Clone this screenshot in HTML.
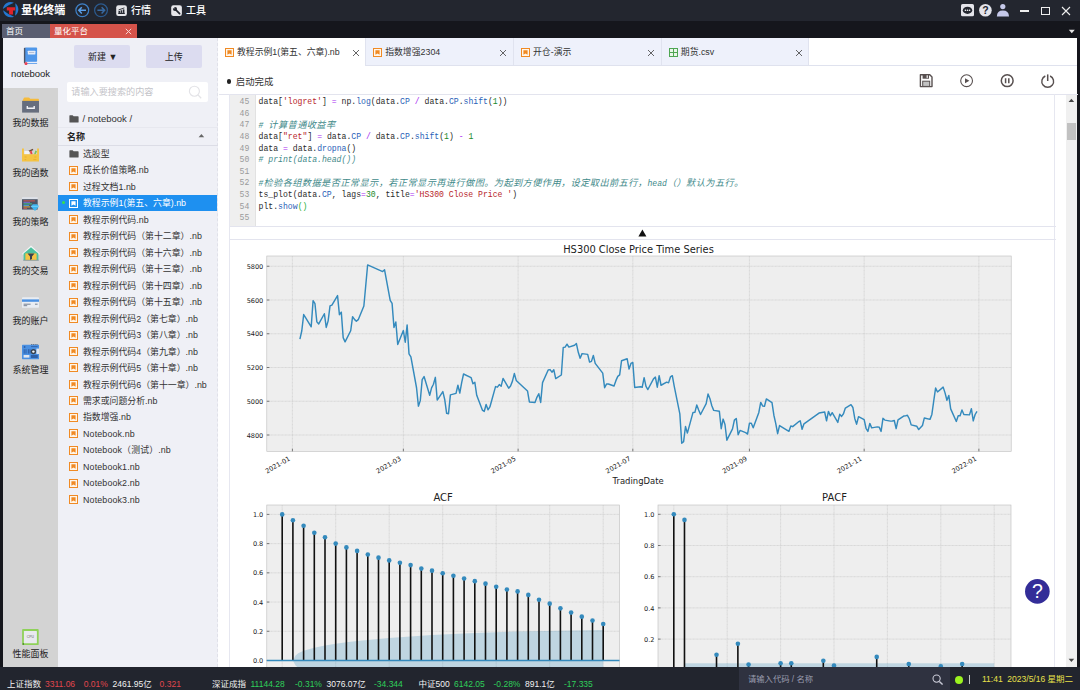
<!DOCTYPE html>
<html lang="zh-CN">
<head>
<meta charset="utf-8">
<title>量化终端</title>
<style>
*{box-sizing:border-box;margin:0;padding:0}
html,body{width:1080px;height:690px;overflow:hidden;background:#15161c}
body{position:relative;font-family:"Liberation Sans","Noto Sans CJK SC",sans-serif;font-size:9px;color:#333;-webkit-font-smoothing:antialiased}
.abs{position:absolute}
#titlebar{left:0;top:0;width:1080px;height:21px;background:#23262f}
#tabrow{left:0;top:21px;width:1080px;height:17px;background:#15161c}
#main{left:2.5px;top:38px;width:1074.5px;height:629px;background:#fff}
#status{left:0;top:667px;width:1080px;height:23px;background:#22252e}
.t{position:absolute;white-space:nowrap;line-height:1}
/* title bar */
#appname{left:21.3px;top:5.2px;font-size:11px;font-weight:bold;color:#fff;letter-spacing:0}
.menu{color:#fff;font-size:10px;top:4px}
/* top tabs */
#tab1{left:2px;top:24px;width:47.5px;height:14px;background:#5a5e71}
#tab2{left:50px;top:24px;width:87px;height:14px;background:#d5534a}
.toptab{color:#fff;font-size:8.5px;top:2.5px}
/* icon sidebar */
#iconbar{left:0;top:0;width:55.5px;height:629px;background:#d3d3d3}
#iconsel{left:0;top:0;width:56px;height:50px;background:#eff0f6}
.ilabel{width:56px;left:0;text-align:center;font-size:9px;color:#222}
/* file panel */
#files{left:55.5px;top:0;width:160px;height:629px;border-right:1px dashed #e0e1e9;background:#eff0f6}
.btn{top:7px;width:55.6px;height:23.3px;background:#dcdcf0;border-radius:2px;text-align:center;line-height:25.4px;font-size:9px;color:#222}
#search{left:9px;top:44px;width:141px;height:20px;background:#fff;border-radius:2px}
.row{left:0;width:159px;height:16.5px}
.row .nm{left:25px;top:4.6px;font-size:8.9px;color:#333}
.row>svg{position:absolute;left:11px;top:4px}
/* notebook */
#nb{left:215.5px;top:0;width:859px;height:629px;background:#fff}
#nbtabs{left:0;top:0;width:859px;height:28px;background:#fff;border-bottom:1px solid #dfe2ee}
.nbtab{top:0;height:27px;border-right:1px solid #e0e3ef;background:#eef1fb}
.nbtab .nm{left:19px;top:10.2px;font-size:8.85px;color:#333}
.nbtab .x{top:5px;font-size:12px;color:#444}
.nbtab>svg:first-child{position:absolute;left:7px;top:10px}
code,.code{font-family:"Liberation Mono","Noto Sans CJK SC",monospace}

.ln{color:#9a9a9a;font-size:8.15px}
.cl{color:#2a2a2a;font-size:8.15px;white-space:pre}
.cl .p{color:#2a62b8}.cl .o{color:#a82cf0}.cl .s{color:#b8262a}.cl .n{color:#1a8a2a}.cl .c{color:#3f8a8a;font-style:italic}.cl .b{color:#1fb13a}
.cl .z{font-size:9.2px;letter-spacing:0.41px}
</style>
</head>
<body>
<!-- ===== title bar ===== -->
<div id="titlebar" class="abs">
  <svg class="abs" style="left:2px;top:1px" width="18" height="19" viewBox="0 0 18 19">
<path d="M0.83 7.91 A7.9 7.9 0 0 1 11.91 1.71 A40 40 0 0 0 0.83 7.91 Z" fill="#2478cf"/>
<path d="M13.23 2.13 A7.9 7.9 0 0 1 13.06 14.83 A40 40 0 0 0 13.23 2.13 Z" fill="#2478cf"/>
<path d="M12.04 15.76 A7.9 7.9 0 0 1 1.13 9.26 A40 40 0 0 0 12.04 15.76 Z" fill="#2478cf"/>
<path d="M4.8 6.3 H13.2 V9.4 H11 V13.6 H7.1 V9.4 H4.8 Z" fill="#e0222a"/>
</svg>
  <div id="appname" class="t">量化终端</div>
  <svg class="abs" style="left:74px;top:2px" width="36" height="17" viewBox="0 0 36 17">
    <circle cx="8.3" cy="8.3" r="6.4" fill="none" stroke="#3f80c6" stroke-width="1.2"/>
    <path d="M12 8.3 H5 M7.8 5.2 L4.8 8.3 L7.8 11.4" fill="none" stroke="#5aa0ea" stroke-width="1.5"/>
    <circle cx="27" cy="8.3" r="6.4" fill="none" stroke="#2c5a8e" stroke-width="1.2"/>
    <path d="M23.4 8.3 H30.4 M27.6 5.2 L30.6 8.3 L27.6 11.4" fill="none" stroke="#386aa2" stroke-width="1.5"/>
  </svg>
  <svg class="abs" style="left:116.1px;top:4.6px" width="12" height="12" viewBox="0 0 12 12">
    <rect x="0.2" y="0.2" width="10.7" height="10.8" rx="2.2" fill="#e6e6ea"/>
    <path d="M2.2 8.4 H8.8" stroke="#23262f" stroke-width="1.2"/>
    <rect x="2.5" y="5.9" width="1.5" height="2" fill="#23262f"/><rect x="4.6" y="5.3" width="1.5" height="2.6" fill="#23262f"/><rect x="6.8" y="4.4" width="1.6" height="3.5" fill="#23262f"/>
    <path d="M2.6 4.9 L8.4 2.9" stroke="#23262f" stroke-width="0.9"/>
  </svg>
  <div class="t menu" style="left:131px;top:6.1px;font-weight:500">行情</div>
  <svg class="abs" style="left:171.3px;top:4.6px" width="12" height="12" viewBox="0 0 12 12">
    <rect x="0.2" y="0.2" width="10.7" height="10.8" rx="2.2" fill="#e6e6ea"/>
    <path d="M4.6 4.6 L8.6 8.6" stroke="#23262f" stroke-width="1.7" stroke-linecap="round"/>
    <circle cx="4" cy="4" r="2.1" fill="#23262f"/>
    <path d="M3.6 3.6 L1.2 3 L3 1.2 Z" fill="#e6e6ea"/>
  </svg>
  <div class="t menu" style="left:186px;top:6.1px;font-weight:500">工具</div>
  <!-- right icons -->
  <svg class="abs" style="left:960px;top:3px" width="16" height="15" viewBox="0 0 16 15">
    <rect x="1" y="1" width="13" height="12.3" rx="1.6" fill="#e4e4ea"/>
    <ellipse cx="7.5" cy="7.3" rx="4.7" ry="3.6" fill="#23262f"/>
    <circle cx="5.4" cy="7.3" r="0.8" fill="#fff"/><circle cx="7.5" cy="7.3" r="0.8" fill="#fff"/><circle cx="9.6" cy="7.3" r="0.8" fill="#fff"/>
  </svg>
  <svg class="abs" style="left:978px;top:3px" width="15" height="15" viewBox="0 0 15 15">
    <circle cx="7.4" cy="7.3" r="6.3" fill="#e4e4ea"/>
    <text x="7.4" y="11" font-size="10.5" font-weight="bold" text-anchor="middle" fill="#23262f" font-family="Liberation Sans, sans-serif">?</text>
  </svg>
  <svg class="abs" style="left:996px;top:3px" width="14" height="15" viewBox="0 0 14 15">
    <circle cx="6.8" cy="3.6" r="2.6" fill="#c6c9ea"/>
    <path d="M0.9 13.5 Q1 7.6 6.8 7.6 Q12.8 7.6 13 13.5 Z" fill="#c6c9ea"/>
  </svg>
  <div class="abs" style="left:1020px;top:10.2px;width:9px;height:1.7px;background:#eee"></div>
  <div class="abs" style="left:1041px;top:7px;width:9px;height:8px;border:1.1px solid #eee"></div>
  <svg class="abs" style="left:1061px;top:6px" width="10" height="10" viewBox="0 0 10 10"><path d="M1 1 L9 9 M9 1 L1 9" stroke="#eee" stroke-width="1.1"/></svg>
</div>
<!-- ===== top tab row ===== -->
<div id="tabrow" class="abs"></div>
<div id="tab1" class="abs"><div class="t toptab" style="left:4px">首页</div></div>
<div id="tab2" class="abs"><div class="t toptab" style="left:4px">量化平台</div>
  <svg class="abs" style="left:75px;top:3.5px" width="7" height="7" viewBox="0 0 7 7"><path d="M0.8 0.8 L6.2 6.2 M6.2 0.8 L0.8 6.2" stroke="#f6d6d3" stroke-width="1"/></svg>
</div>
<svg class="abs" style="left:1068px;top:29px" width="8" height="5" viewBox="0 0 8 5"><path d="M0.8 0.8 H6.8 L3.8 4.2 Z" fill="#e6e6e6"/></svg>
<div id="main" class="abs">
<div id="iconbar" class="abs">
<div id="iconsel" class="abs"></div>
<svg class="abs" style="left:20.50px;top:8.50px" width="15" height="18.5" viewBox="0 0 15 18.5"><rect x="0.9" y="0.8" width="2.4" height="15.4" rx="0.6" fill="#4b5568"/><rect x="2.3" y="0.6" width="11.8" height="14.3" rx="0.9" fill="#4f97ea"/><rect x="2.2" y="14.8" width="11.9" height="1.5" fill="#e9eefa"/><rect x="2.2" y="16.2" width="11.9" height="0.8" fill="#4f97ea"/><rect x="4.8" y="3.8" width="7.6" height="3.6" rx="0.4" fill="#e6ecf7"/><rect x="6" y="5" width="5.2" height="1" fill="#b5c0d6"/><circle cx="3" cy="16.6" r="1.5" fill="#ea4358"/></svg>
<svg class="abs" style="left:19.50px;top:59.00px" width="17.4" height="16" viewBox="0 0 17.4 16"><path d="M0.2 4.4 L1.8 0.9 Q2 0.5 2.5 0.5 H6.6 Q7 0.5 7.3 0.8 L8.2 1.7 H16.2 Q16.9 1.7 16.9 2.4 V4.4 Z" fill="#f6bb3c"/><rect x="0.1" y="3.9" width="17" height="11.7" fill="#666e7e"/><path d="M5.3 8.9 V11.2 H12.2 V8.9" stroke="#f2f3f7" stroke-width="1.4" fill="none"/></svg>
<svg class="abs" style="left:19.50px;top:109.50px" width="17.2" height="14" viewBox="0 0 17.2 14"><path d="M5.2 3.4 L10.6 0.8 L11.4 2 L6.4 4.6 Z" fill="#6b4a35"/><rect x="2.4" y="3" width="5" height="3.4" fill="#f3f3f3"/><path d="M7.8 3.4 L9.6 2.8 L10.6 6.2 L8.8 6.6 Z" fill="#e5414a"/><path d="M12 6.4 L13.4 2.6 L15 3.2 L13.6 6.6 Z" fill="#7cc35a"/><path d="M0 0.6 H1.9 V6.3 H15.1 V0.6 H17 V13.5 H0 Z" fill="#f5c443"/><path d="M2.6 9 H4.6 M12.4 9 H14.4 M2.6 11.6 H4.2 M11.4 11.6 H14.4" stroke="#e3ab2a" stroke-width="0.8"/></svg>
<svg class="abs" style="left:19.50px;top:158.80px" width="17.4" height="14.2" viewBox="0 0 17.4 14.2"><rect x="0" y="0.2" width="15.7" height="2.2" fill="#dfe3ea"/><rect x="0" y="2.2" width="15.7" height="10.4" fill="#4c5566"/><path d="M1.5 3.9 H13" stroke="#e4574c" stroke-width="0.9"/><path d="M1.5 5.4 H8" stroke="#7b68d9" stroke-width="0.9"/><path d="M1.5 6.9 H10" stroke="#3ccf8e" stroke-width="0.9"/><path d="M1.5 8.4 H7" stroke="#4aa3ea" stroke-width="0.9"/><path d="M1.5 9.9 H8" stroke="#f0b73a" stroke-width="0.9"/><path d="M1.5 11.3 H5" stroke="#e4574c" stroke-width="0.9"/><path d="M8.8 9.4 L10.8 7.3 H15.2 L17.2 9.4 L13 13.9 Z" fill="#3fb6ef"/><path d="M8.8 9.4 H17.2" stroke="#8edaf9" stroke-width="0.6"/></svg>
<svg class="abs" style="left:19.10px;top:207.40px" width="18" height="15.8" viewBox="0 0 18 15.8"><path d="M0.3 8.4 L9 0.6 L17.7 8.4 V9.4 H0.3 Z" fill="#f4f6f7"/><path d="M1.6 8.6 L9 2.2 L16.4 8.6 V15.2 H1.6 Z" fill="#4cc09e"/><rect x="3.4" y="8.4" width="11.2" height="6.8" fill="#f6c443"/><path d="M5.6 8.4 H12.4 L10 11.6 V14 L8 15 V11.6 Z" fill="#39424f"/><rect x="1.2" y="14.8" width="15.6" height="0.8" fill="#8a919c"/></svg>
<svg class="abs" style="left:19.50px;top:259.20px" width="17.4" height="11.2" viewBox="0 0 17.4 11.2"><rect x="0" y="0.2" width="17.1" height="10.6" rx="0.9" fill="#e9edf3"/><rect x="0" y="2.4" width="17.1" height="2.4" fill="#4a90e2"/><path d="M1.6 7.2 H8.6 M1.6 8.7 H5.2" stroke="#5b6678" stroke-width="0.8"/><path d="M13 7.2 H15.6" stroke="#5b6678" stroke-width="0.8"/></svg>
<svg class="abs" style="left:19.50px;top:306.40px" width="17.4" height="15.6" viewBox="0 0 17.4 15.6"><path d="M9 0.5 H16 " stroke="#3c4656" stroke-width="0.7" stroke-dasharray="1.2 0.6"/><rect x="0" y="0.8" width="17.1" height="14.4" rx="0.6" fill="#4a90e2"/><path d="M9 2.6 H15.6" stroke="#2f5fa6" stroke-width="0.9"/><circle cx="2.6" cy="3" r="0.9" fill="#2f5fa6"/><path d="M2.2 5.2 V9.6 M4 5.2 V9.6 M6.4 5.2 V9.6 M8 5.2 V9.6" stroke="#2f5fa6" stroke-width="1"/><rect x="14.4" y="4.6" width="2.7" height="5.4" fill="#dfe6f1"/><circle cx="11.4" cy="7.6" r="2.7" fill="#39424f"/><circle cx="11.4" cy="7.6" r="1.2" fill="#f2f4f8"/><rect x="1.6" y="11" width="5.8" height="2.6" fill="#dfe6f1"/><rect x="9" y="11" width="6.8" height="3" fill="#2f5fa6"/></svg>
<svg class="abs" style="left:19.50px;top:591.40px" width="17" height="16.4" viewBox="0 0 17 16.4"><rect x="0.1" y="0.1" width="16.6" height="16" rx="0.9" fill="#8fd15a"/><rect x="1.9" y="1.9" width="13" height="12.4" rx="0.5" fill="#e8e9ef"/><text x="8.4" y="9.2" font-size="3.4" text-anchor="middle" fill="#666" font-family="Liberation Sans, sans-serif">CPU</text><circle cx="1.3" cy="15" r="0.8" fill="#356d22"/></svg>
<div class="t ilabel" style="top:31.30px;font-size:9.5px;font-family:'Liberation Sans',sans-serif">notebook</div>
<div class="t ilabel" style="top:81.30px">我的数据</div>
<div class="t ilabel" style="top:130.80px">我的函数</div>
<div class="t ilabel" style="top:180.00px">我的策略</div>
<div class="t ilabel" style="top:229.30px">我的交易</div>
<div class="t ilabel" style="top:278.60px">我的账户</div>
<div class="t ilabel" style="top:327.80px">系统管理</div>
<div class="t ilabel" style="top:611.90px">性能面板</div>
</div>
<div id="files" class="abs">
<div class="abs btn" style="left:16.0px"><span style="position:relative;left:0.8px">新建 ▼</span></div><div class="abs btn" style="left:88.0px">上传</div>
<div id="search" class="abs"><div class="t" style="left:4.3px;top:5.9px;font-size:9.13px;color:#c3c3c8">请输入要搜索的内容</div><svg class="abs" style="left:121px;top:2.6px" width="15" height="15" viewBox="0 0 15 15"><circle cx="6.4" cy="6.2" r="5" fill="none" stroke="#e3e3e7" stroke-width="1.15"/><path d="M10 9.9 L13.2 13.2" stroke="#e3e3e7" stroke-width="1.3"/></svg></div>
<div class="abs" style="left:10.7px;top:76.6px;line-height:0"><svg width="10" height="8" viewBox="0 0 10 8"><path d="M0.4 0.8 Q0.4 0.3 0.9 0.3 H3.6 L4.6 1.3 H9 Q9.6 1.3 9.6 1.9 V7 Q9.6 7.6 9 7.6 H1 Q0.4 7.6 0.4 7 Z" fill="#555"/></svg></div><div class="t" style="left:24.4px;top:75.6px;font-size:9.5px;color:#333;font-family:'Liberation Sans',sans-serif">/ notebook /</div>
<div class="abs" style="left:0;top:88.6px;width:160px;height:1px;background:#e7e8ef"></div><div class="t" style="left:9.0px;top:94.5px;font-size:9px;font-weight:bold;color:#222">名称</div><svg class="abs" style="left:140.0px;top:95.4px" width="7" height="5" viewBox="0 0 7 5"><path d="M0.6 4.2 L3.4 1 L6.2 4.2 Z" fill="#666"/></svg><div class="abs" style="left:0;top:106.5px;width:160px;height:1px;background:#dcdde6"></div>
<div class="abs row" style="top:107.35px"><svg style="top:4.8px" width="10" height="8" viewBox="0 0 10 8"><path d="M0.4 0.8 Q0.4 0.3 0.9 0.3 H3.6 L4.6 1.3 H9 Q9.6 1.3 9.6 1.9 V7 Q9.6 7.6 9 7.6 H1 Q0.4 7.6 0.4 7 Z" fill="#555"/></svg><div class="t nm">选股型</div></div>
<div class="abs row" style="top:123.82px"><svg width="9" height="9" viewBox="0 0 9 9"><rect x="0.5" y="0.5" width="8" height="8" fill="#fff6ea" stroke="#f08a24" stroke-width="1"/><path d="M2.4 2.2 H6.6 V6.8 L4.5 5.4 L2.4 6.8 Z" fill="#f08a24"/></svg><div class="t nm">成长价值策略.nb</div></div>
<div class="abs row" style="top:140.29px"><svg width="9" height="9" viewBox="0 0 9 9"><rect x="0.5" y="0.5" width="8" height="8" fill="#fff6ea" stroke="#f08a24" stroke-width="1"/><path d="M2.4 2.2 H6.6 V6.8 L4.5 5.4 L2.4 6.8 Z" fill="#f08a24"/></svg><div class="t nm">过程文档1.nb</div></div>
<div class="abs row" style="top:156.76px;background:#1e90f0"><div class="abs" style="left:3.8px;top:6.6px;width:3px;height:3px;border-radius:2px;background:#35e04a"></div><svg width="9" height="9" viewBox="0 0 9 9"><rect x="0.5" y="0.5" width="8" height="8" fill="#1e90f0" stroke="#fff" stroke-width="1"/><path d="M2.4 2.2 H6.6 V6.8 L4.5 5.4 L2.4 6.8 Z" fill="#fff"/></svg><div class="t nm" style="color:#fff">教程示例1(第五、六章).nb</div></div>
<div class="abs row" style="top:173.23px"><svg width="9" height="9" viewBox="0 0 9 9"><rect x="0.5" y="0.5" width="8" height="8" fill="#fff6ea" stroke="#f08a24" stroke-width="1"/><path d="M2.4 2.2 H6.6 V6.8 L4.5 5.4 L2.4 6.8 Z" fill="#f08a24"/></svg><div class="t nm">教程示例代码.nb</div></div>
<div class="abs row" style="top:189.70px"><svg width="9" height="9" viewBox="0 0 9 9"><rect x="0.5" y="0.5" width="8" height="8" fill="#fff6ea" stroke="#f08a24" stroke-width="1"/><path d="M2.4 2.2 H6.6 V6.8 L4.5 5.4 L2.4 6.8 Z" fill="#f08a24"/></svg><div class="t nm">教程示例代码（第十二章）.nb</div></div>
<div class="abs row" style="top:206.17px"><svg width="9" height="9" viewBox="0 0 9 9"><rect x="0.5" y="0.5" width="8" height="8" fill="#fff6ea" stroke="#f08a24" stroke-width="1"/><path d="M2.4 2.2 H6.6 V6.8 L4.5 5.4 L2.4 6.8 Z" fill="#f08a24"/></svg><div class="t nm">教程示例代码（第十六章）.nb</div></div>
<div class="abs row" style="top:222.64px"><svg width="9" height="9" viewBox="0 0 9 9"><rect x="0.5" y="0.5" width="8" height="8" fill="#fff6ea" stroke="#f08a24" stroke-width="1"/><path d="M2.4 2.2 H6.6 V6.8 L4.5 5.4 L2.4 6.8 Z" fill="#f08a24"/></svg><div class="t nm">教程示例代码（第十三章）.nb</div></div>
<div class="abs row" style="top:239.11px"><svg width="9" height="9" viewBox="0 0 9 9"><rect x="0.5" y="0.5" width="8" height="8" fill="#fff6ea" stroke="#f08a24" stroke-width="1"/><path d="M2.4 2.2 H6.6 V6.8 L4.5 5.4 L2.4 6.8 Z" fill="#f08a24"/></svg><div class="t nm">教程示例代码（第十四章）.nb</div></div>
<div class="abs row" style="top:255.58px"><svg width="9" height="9" viewBox="0 0 9 9"><rect x="0.5" y="0.5" width="8" height="8" fill="#fff6ea" stroke="#f08a24" stroke-width="1"/><path d="M2.4 2.2 H6.6 V6.8 L4.5 5.4 L2.4 6.8 Z" fill="#f08a24"/></svg><div class="t nm">教程示例代码（第十五章）.nb</div></div>
<div class="abs row" style="top:272.05px"><svg width="9" height="9" viewBox="0 0 9 9"><rect x="0.5" y="0.5" width="8" height="8" fill="#fff6ea" stroke="#f08a24" stroke-width="1"/><path d="M2.4 2.2 H6.6 V6.8 L4.5 5.4 L2.4 6.8 Z" fill="#f08a24"/></svg><div class="t nm">教程示例代码2（第七章）.nb</div></div>
<div class="abs row" style="top:288.52px"><svg width="9" height="9" viewBox="0 0 9 9"><rect x="0.5" y="0.5" width="8" height="8" fill="#fff6ea" stroke="#f08a24" stroke-width="1"/><path d="M2.4 2.2 H6.6 V6.8 L4.5 5.4 L2.4 6.8 Z" fill="#f08a24"/></svg><div class="t nm">教程示例代码3（第八章）.nb</div></div>
<div class="abs row" style="top:304.99px"><svg width="9" height="9" viewBox="0 0 9 9"><rect x="0.5" y="0.5" width="8" height="8" fill="#fff6ea" stroke="#f08a24" stroke-width="1"/><path d="M2.4 2.2 H6.6 V6.8 L4.5 5.4 L2.4 6.8 Z" fill="#f08a24"/></svg><div class="t nm">教程示例代码4（第九章）.nb</div></div>
<div class="abs row" style="top:321.46px"><svg width="9" height="9" viewBox="0 0 9 9"><rect x="0.5" y="0.5" width="8" height="8" fill="#fff6ea" stroke="#f08a24" stroke-width="1"/><path d="M2.4 2.2 H6.6 V6.8 L4.5 5.4 L2.4 6.8 Z" fill="#f08a24"/></svg><div class="t nm">教程示例代码5（第十章）.nb</div></div>
<div class="abs row" style="top:337.93px"><svg width="9" height="9" viewBox="0 0 9 9"><rect x="0.5" y="0.5" width="8" height="8" fill="#fff6ea" stroke="#f08a24" stroke-width="1"/><path d="M2.4 2.2 H6.6 V6.8 L4.5 5.4 L2.4 6.8 Z" fill="#f08a24"/></svg><div class="t nm">教程示例代码6（第十一章）.nb</div></div>
<div class="abs row" style="top:354.40px"><svg width="9" height="9" viewBox="0 0 9 9"><rect x="0.5" y="0.5" width="8" height="8" fill="#fff6ea" stroke="#f08a24" stroke-width="1"/><path d="M2.4 2.2 H6.6 V6.8 L4.5 5.4 L2.4 6.8 Z" fill="#f08a24"/></svg><div class="t nm">需求或问题分析.nb</div></div>
<div class="abs row" style="top:370.87px"><svg width="9" height="9" viewBox="0 0 9 9"><rect x="0.5" y="0.5" width="8" height="8" fill="#fff6ea" stroke="#f08a24" stroke-width="1"/><path d="M2.4 2.2 H6.6 V6.8 L4.5 5.4 L2.4 6.8 Z" fill="#f08a24"/></svg><div class="t nm">指数增强.nb</div></div>
<div class="abs row" style="top:387.34px"><svg width="9" height="9" viewBox="0 0 9 9"><rect x="0.5" y="0.5" width="8" height="8" fill="#fff6ea" stroke="#f08a24" stroke-width="1"/><path d="M2.4 2.2 H6.6 V6.8 L4.5 5.4 L2.4 6.8 Z" fill="#f08a24"/></svg><div class="t nm" style="letter-spacing:0.14px">Notebook.nb</div></div>
<div class="abs row" style="top:403.81px"><svg width="9" height="9" viewBox="0 0 9 9"><rect x="0.5" y="0.5" width="8" height="8" fill="#fff6ea" stroke="#f08a24" stroke-width="1"/><path d="M2.4 2.2 H6.6 V6.8 L4.5 5.4 L2.4 6.8 Z" fill="#f08a24"/></svg><div class="t nm" style="letter-spacing:0.14px">Notebook（测试）.nb</div></div>
<div class="abs row" style="top:420.28px"><svg width="9" height="9" viewBox="0 0 9 9"><rect x="0.5" y="0.5" width="8" height="8" fill="#fff6ea" stroke="#f08a24" stroke-width="1"/><path d="M2.4 2.2 H6.6 V6.8 L4.5 5.4 L2.4 6.8 Z" fill="#f08a24"/></svg><div class="t nm" style="letter-spacing:0.14px">Notebook1.nb</div></div>
<div class="abs row" style="top:436.75px"><svg width="9" height="9" viewBox="0 0 9 9"><rect x="0.5" y="0.5" width="8" height="8" fill="#fff6ea" stroke="#f08a24" stroke-width="1"/><path d="M2.4 2.2 H6.6 V6.8 L4.5 5.4 L2.4 6.8 Z" fill="#f08a24"/></svg><div class="t nm" style="letter-spacing:0.14px">Notebook2.nb</div></div>
<div class="abs row" style="top:453.22px"><svg width="9" height="9" viewBox="0 0 9 9"><rect x="0.5" y="0.5" width="8" height="8" fill="#fff6ea" stroke="#f08a24" stroke-width="1"/><path d="M2.4 2.2 H6.6 V6.8 L4.5 5.4 L2.4 6.8 Z" fill="#f08a24"/></svg><div class="t nm" style="letter-spacing:0.14px">Notebook3.nb</div></div>
</div>

<div id="nb" class="abs">
<div id="nbtabs" class="abs">
<div class="abs nbtab" style="left:0px;width:148.2px;background:#fff;height:28px"><svg width="9" height="9" viewBox="0 0 9 9"><rect x="0.5" y="0.5" width="8" height="8" fill="#fff6ea" stroke="#f08a24" stroke-width="1"/><path d="M2.4 2.2 H6.6 V6.8 L4.5 5.4 L2.4 6.8 Z" fill="#f08a24"/></svg><div class="t nm">教程示例1(第五、六章).nb</div><svg class="abs" style="left:133.5px;top:11px" width="8" height="8" viewBox="0 0 8 8"><path d="M1 1 L7 7 M7 1 L1 7" stroke="#4a4a4a" stroke-width="0.85"/></svg></div>
<div class="abs nbtab" style="left:148.2px;width:147.8px;"><svg width="9" height="9" viewBox="0 0 9 9"><rect x="0.5" y="0.5" width="8" height="8" fill="#fff6ea" stroke="#f08a24" stroke-width="1"/><path d="M2.4 2.2 H6.6 V6.8 L4.5 5.4 L2.4 6.8 Z" fill="#f08a24"/></svg><div class="t nm">指数增强2304</div><svg class="abs" style="left:133px;top:11px" width="8" height="8" viewBox="0 0 8 8"><path d="M1 1 L7 7 M7 1 L1 7" stroke="#4a4a4a" stroke-width="0.85"/></svg></div>
<div class="abs nbtab" style="left:296px;width:147.8px;"><svg width="9" height="9" viewBox="0 0 9 9"><rect x="0.5" y="0.5" width="8" height="8" fill="#fff6ea" stroke="#f08a24" stroke-width="1"/><path d="M2.4 2.2 H6.6 V6.8 L4.5 5.4 L2.4 6.8 Z" fill="#f08a24"/></svg><div class="t nm">开仓-演示</div><svg class="abs" style="left:133px;top:11px" width="8" height="8" viewBox="0 0 8 8"><path d="M1 1 L7 7 M7 1 L1 7" stroke="#4a4a4a" stroke-width="0.85"/></svg></div>
<div class="abs nbtab" style="left:443.8px;width:147.7px;"><svg width="9" height="9" viewBox="0 0 9 9"><rect x="0.5" y="0.5" width="8" height="8" fill="#eaf6ea" stroke="#4fa653" stroke-width="1"/><path d="M4.5 0.5 V8.5 M0.5 4.5 H8.5" stroke="#4fa653" stroke-width="1"/></svg><div class="t nm">期货.csv</div><svg class="abs" style="left:133px;top:11px" width="8" height="8" viewBox="0 0 8 8"><path d="M1 1 L7 7 M7 1 L1 7" stroke="#4a4a4a" stroke-width="0.85"/></svg></div>
</div>
<div class="abs" style="left:8.5px;top:41px;width:4.5px;height:4.5px;border-radius:3px;background:#222"></div><div class="t" style="left:17.8px;top:38.6px;font-size:9.4px;color:#333">启动完成</div>
<svg class="abs" style="left:699.6px;top:33.8px" width="140" height="18" viewBox="0 0 140 18">
<g fill="none" stroke="#585050" stroke-width="1.4">
<path d="M2.4 2.7 H11.8 L14 4.9 V14.6 H2.4 Z" stroke-linejoin="round"/><rect x="4.6" y="2.7" width="6.4" height="4" fill="#585050" stroke="none"/><rect x="8.6" y="3.3" width="1.2" height="2.6" fill="#fff" stroke="none"/>
<rect x="4.7" y="9.2" width="7" height="5.2" fill="#c2c2c2" stroke="#585050" stroke-width="1"/>
<circle cx="48.6" cy="8.7" r="5.9" stroke-width="1.1"/><path d="M47 6.2 L51.4 8.7 L47 11.2 Z" fill="#585050" stroke="none"/>
<circle cx="89.2" cy="8.7" r="5.9" stroke-width="1.5"/><path d="M87.6 6.2 V11.2 M90.8 6.2 V11.2" stroke-width="1.5"/>
<path d="M127.3 4 A5.9 5.9 0 1 0 132.1 4" stroke-width="1.4"/><path d="M129.7 2.4 V9" stroke-width="1.5"/>
</g></svg>
<div class="abs" style="left:0.6px;top:56px;width:859px;height:1px;background:#e3e4ee"></div>
<div class="abs" style="left:10.800000000000011px;top:56.0px;width:826.7px;height:574px;border-left:1px solid #e6e7f0;border-right:1px solid #e6e7f0"></div>
<div class="abs" style="left:11.800000000000011px;top:57.0px;width:26.099999999999994px;height:131px;background:#efefef;border-right:1px solid #e2e2e2"></div>
<div class="abs" style="left:11.5px;top:188.0px;width:826.0px;height:1px;background:#e3e4ee"></div>
<div class="abs" style="left:11.5px;top:201.0px;width:826.0px;height:1px;background:#e3e4ee"></div>
<svg class="abs" style="left:420.0px;top:190.8px" width="9" height="8" viewBox="0 0 9 8"><path d="M0.4 7.4 L4.4 0.6 L8.4 7.4 Z" fill="#111"/></svg>
<div class="t code ln" style="left:21.5px;top:60.10px">45</div><div class="t code cl" style="left:40.60000000000002px;top:60.10px">data[<span class="s">'logret'</span>] <span class="o">=</span> np.<span class="p">log</span>(data.<span class="p">CP</span> <span class="o">/</span> data.<span class="p">CP</span>.<span class="p">shift</span>(<span class="n">1</span>))</div>
<div class="t code ln" style="left:21.5px;top:71.72px">46</div>
<div class="t code ln" style="left:21.5px;top:83.34px">47</div><div class="t code cl" style="left:40.60000000000002px;top:83.34px"><span class="c"># <span class="z">计算普通收益率</span></span></div>
<div class="t code ln" style="left:21.5px;top:94.96px">48</div><div class="t code cl" style="left:40.60000000000002px;top:94.96px">data[<span class="s">"ret"</span>] <span class="o">=</span> data.<span class="p">CP</span> <span class="o">/</span> data.<span class="p">CP</span>.<span class="p">shift</span>(<span class="n">1</span>) <span class="o">-</span> <span class="n">1</span></div>
<div class="t code ln" style="left:21.5px;top:106.58px">49</div><div class="t code cl" style="left:40.60000000000002px;top:106.58px">data <span class="o">=</span> data.<span class="p">dropna</span>()</div>
<div class="t code ln" style="left:21.5px;top:118.20px">50</div><div class="t code cl" style="left:40.60000000000002px;top:118.20px"><span class="c"># print(data.head())</span></div>
<div class="t code ln" style="left:21.5px;top:129.82px">51</div>
<div class="t code ln" style="left:21.5px;top:141.44px">52</div><div class="t code cl" style="left:40.60000000000002px;top:141.44px"><span class="c">#<span class="z">检验各组数据是否正常显示，若正常显示再进行做图。为起到方便作用，设定取出前五行，</span>head<span class="z">（）默认为五行。</span></span></div>
<div class="t code ln" style="left:21.5px;top:153.06px">53</div><div class="t code cl" style="left:40.60000000000002px;top:153.06px">ts_plot(data.<span class="p">CP</span>, lags<span class="o">=</span><span class="n">30</span>, title<span class="o">=</span><span class="s">'HS300 Close Price '</span>)</div>
<div class="t code ln" style="left:21.5px;top:164.68px">54</div><div class="t code cl" style="left:40.60000000000002px;top:164.68px">plt.<span class="p">show</span><span class="b">()</span></div>
<div class="t code ln" style="left:21.5px;top:176.30px">55</div>
<svg class="abs" style="left:12.5px;top:202.0px" width="824.5" height="427" viewBox="230.5 240 824.5 427" font-family="DejaVu Sans, sans-serif">
<rect x="266.3" y="256" width="744.4000000000001" height="195.3" fill="#eeeeee" stroke="#bcbcbc" stroke-width="0.6"/>
<path d="M291.90 256 V451.3" stroke="#c0c0c0" stroke-width="0.55" stroke-dasharray="0.9 0.5"/>
<path d="M291.90 451.3 v-2.6" stroke="#333" stroke-width="0.6"/><text x="290.10" y="460.00" font-size="6.55" fill="#222" text-anchor="end" transform="rotate(-30 290.10 460.00)">2021-01</text>
<path d="M402.87 256 V451.3" stroke="#c0c0c0" stroke-width="0.55" stroke-dasharray="0.9 0.5"/>
<path d="M402.87 451.3 v-2.6" stroke="#333" stroke-width="0.6"/><text x="401.07" y="460.00" font-size="6.55" fill="#222" text-anchor="end" transform="rotate(-30 401.07 460.00)">2021-03</text>
<path d="M517.60 256 V451.3" stroke="#c0c0c0" stroke-width="0.55" stroke-dasharray="0.9 0.5"/>
<path d="M517.60 451.3 v-2.6" stroke="#333" stroke-width="0.6"/><text x="515.80" y="460.00" font-size="6.55" fill="#222" text-anchor="end" transform="rotate(-30 515.80 460.00)">2021-05</text>
<path d="M632.32 256 V451.3" stroke="#c0c0c0" stroke-width="0.55" stroke-dasharray="0.9 0.5"/>
<path d="M632.32 451.3 v-2.6" stroke="#333" stroke-width="0.6"/><text x="630.52" y="460.00" font-size="6.55" fill="#222" text-anchor="end" transform="rotate(-30 630.52 460.00)">2021-07</text>
<path d="M748.93 256 V451.3" stroke="#c0c0c0" stroke-width="0.55" stroke-dasharray="0.9 0.5"/>
<path d="M748.93 451.3 v-2.6" stroke="#333" stroke-width="0.6"/><text x="747.13" y="460.00" font-size="6.55" fill="#222" text-anchor="end" transform="rotate(-30 747.13 460.00)">2021-09</text>
<path d="M863.66 256 V451.3" stroke="#c0c0c0" stroke-width="0.55" stroke-dasharray="0.9 0.5"/>
<path d="M863.66 451.3 v-2.6" stroke="#333" stroke-width="0.6"/><text x="861.86" y="460.00" font-size="6.55" fill="#222" text-anchor="end" transform="rotate(-30 861.86 460.00)">2021-11</text>
<path d="M978.39 256 V451.3" stroke="#c0c0c0" stroke-width="0.55" stroke-dasharray="0.9 0.5"/>
<path d="M978.39 451.3 v-2.6" stroke="#333" stroke-width="0.6"/><text x="976.59" y="460.00" font-size="6.55" fill="#222" text-anchor="end" transform="rotate(-30 976.59 460.00)">2022-01</text>
<path d="M266.3 435.00 H1010.7" stroke="#c0c0c0" stroke-width="0.55" stroke-dasharray="0.9 0.5"/>
<path d="M266.3 435.00 h2.6" stroke="#333" stroke-width="0.6"/><text x="262.8" y="437.60" font-size="6.55" fill="#222" text-anchor="end">4800</text>
<path d="M266.3 401.25 H1010.7" stroke="#c0c0c0" stroke-width="0.55" stroke-dasharray="0.9 0.5"/>
<path d="M266.3 401.25 h2.6" stroke="#333" stroke-width="0.6"/><text x="262.8" y="403.85" font-size="6.55" fill="#222" text-anchor="end">5000</text>
<path d="M266.3 367.50 H1010.7" stroke="#c0c0c0" stroke-width="0.55" stroke-dasharray="0.9 0.5"/>
<path d="M266.3 367.50 h2.6" stroke="#333" stroke-width="0.6"/><text x="262.8" y="370.10" font-size="6.55" fill="#222" text-anchor="end">5200</text>
<path d="M266.3 333.75 H1010.7" stroke="#c0c0c0" stroke-width="0.55" stroke-dasharray="0.9 0.5"/>
<path d="M266.3 333.75 h2.6" stroke="#333" stroke-width="0.6"/><text x="262.8" y="336.35" font-size="6.55" fill="#222" text-anchor="end">5400</text>
<path d="M266.3 300.00 H1010.7" stroke="#c0c0c0" stroke-width="0.55" stroke-dasharray="0.9 0.5"/>
<path d="M266.3 300.00 h2.6" stroke="#333" stroke-width="0.6"/><text x="262.8" y="302.60" font-size="6.55" fill="#222" text-anchor="end">5600</text>
<path d="M266.3 266.25 H1010.7" stroke="#c0c0c0" stroke-width="0.55" stroke-dasharray="0.9 0.5"/>
<path d="M266.3 266.25 h2.6" stroke="#333" stroke-width="0.6"/><text x="262.8" y="268.85" font-size="6.55" fill="#222" text-anchor="end">5800</text>
<path d="M299.42 339.07 L301.30 330.77 L303.18 314.57 L305.07 317.65 L310.71 326.80 L312.59 300.62 L314.47 303.72 L316.35 321.86 L318.23 323.95 L323.87 313.75 L325.75 327.42 L327.64 320.85 L329.52 305.91 L331.40 305.10 L337.04 295.63 L338.92 314.69 L340.80 312.15 L342.68 337.61 L344.56 341.86 L350.20 330.77 L352.09 316.69 L353.97 319.37 L355.85 321.27 L357.73 319.67 L363.37 305.98 L365.25 285.45 L367.13 264.95 L382.18 271.59 L384.06 269.82 L389.70 300.45 L391.58 303.43 L393.46 327.41 L395.34 322.01 L397.22 344.42 L402.87 330.58 L404.75 342.25 L406.63 324.94 L408.51 353.88 L410.39 356.90 L416.03 387.75 L417.91 406.15 L419.79 400.64 L421.68 379.61 L423.56 376.55 L429.20 395.25 L431.08 387.86 L432.96 384.23 L434.84 377.33 L436.72 400.05 L442.36 391.61 L444.24 399.69 L446.13 413.28 L448.01 413.68 L449.89 394.84 L455.53 393.34 L457.41 385.26 L459.29 393.09 L461.17 382.56 L463.05 373.99 L470.58 377.57 L472.46 383.74 L474.34 382.31 L476.22 395.29 L481.86 410.07 L483.74 411.44 L485.62 404.52 L487.50 409.86 L489.38 406.96 L495.03 386.57 L496.91 387.18 L498.79 384.59 L500.67 386.19 L502.55 378.39 L508.19 388.22 L510.07 385.98 L511.95 381.13 L513.83 373.55 L515.72 380.41 L527.00 390.94 L528.88 401.92 L534.52 402.53 L536.40 397.36 L538.28 393.73 L540.17 402.44 L542.05 382.59 L547.69 370.03 L549.57 369.59 L551.45 372.18 L553.33 369.79 L555.21 378.61 L560.85 374.99 L562.74 347.51 L564.62 347.15 L566.50 344.17 L568.38 347.07 L574.02 345.30 L575.90 343.59 L577.78 352.32 L579.66 358.17 L581.54 353.62 L587.19 354.40 L589.07 362.08 L590.95 361.35 L592.83 355.44 L594.71 363.33 L602.23 373.14 L604.11 387.67 L605.99 384.06 L607.87 383.96 L613.52 386.00 L615.40 380.64 L617.28 376.38 L619.16 374.93 L621.04 360.76 L626.68 358.77 L628.56 369.10 L630.44 363.44 L632.32 362.49 L634.21 387.56 L639.85 386.77 L641.73 387.23 L643.61 377.62 L645.49 386.36 L647.37 389.53 L653.01 378.86 L654.89 377.12 L656.78 387.23 L658.66 375.69 L660.54 385.26 L666.18 382.17 L668.06 382.86 L669.94 376.94 L671.82 375.64 L673.70 386.19 L679.34 413.86 L681.23 443.22 L683.11 441.68 L684.99 426.52 L686.87 433.12 L692.51 412.43 L694.39 412.36 L696.27 404.90 L698.15 409.91 L700.03 414.49 L705.68 403.69 L707.56 393.97 L709.44 398.66 L711.32 405.75 L713.20 410.37 L718.84 411.19 L720.72 428.69 L722.60 419.10 L724.48 424.51 L726.36 440.19 L732.01 428.95 L733.89 420.09 L735.77 418.44 L737.65 434.73 L739.53 430.44 L745.17 432.69 L747.05 434.05 L748.93 423.28 L750.82 423.20 L752.70 427.73 L758.34 412.43 L760.22 402.46 L762.10 405.95 L763.98 406.26 L765.86 398.97 L771.50 402.66 L773.38 415.23 L775.27 423.64 L777.15 433.70 L779.03 425.56 L788.43 431.33 L790.31 426.02 L792.19 426.66 L797.84 421.94 L799.72 420.85 L801.60 429.27 L803.48 423.80 L818.52 413.07 L824.17 412.02 L826.05 420.85 L827.93 411.36 L829.81 415.83 L831.69 412.71 L837.33 422.38 L839.21 414.29 L841.09 416.40 L842.97 413.76 L844.86 408.05 L850.50 404.71 L852.38 407.48 L854.26 418.44 L856.14 424.18 L858.02 416.65 L863.66 419.70 L865.54 428.28 L867.42 431.42 L869.31 423.40 L871.19 427.85 L876.83 426.87 L878.71 427.11 L880.59 431.42 L882.47 418.35 L884.35 420.09 L889.99 421.10 L891.88 420.94 L893.76 420.53 L895.64 428.65 L897.52 419.80 L903.16 416.03 L905.04 415.87 L906.92 415.31 L908.80 418.73 L910.68 424.85 L916.33 426.32 L918.21 429.59 L920.09 427.60 L921.97 425.52 L923.85 417.95 L929.49 419.37 L931.37 414.40 L933.25 400.96 L935.13 387.97 L937.01 391.95 L942.66 387.11 L944.54 392.86 L946.42 400.25 L948.30 395.39 L950.18 408.88 L955.82 421.43 L957.70 415.69 L959.58 415.69 L961.46 409.90 L963.35 414.52 L968.99 414.86 L970.87 408.68 L972.75 420.91 L974.63 414.50 L976.51 411.31" fill="none" stroke="#348abd" stroke-width="1.45" stroke-linejoin="round"/>
<text x="638" y="252.5" font-size="9.9" fill="#222" text-anchor="middle">HS300 Close Price Time Series</text>
<text x="637.6" y="484.4" font-size="8.45" fill="#222" text-anchor="middle">TradingDate</text>
<clipPath id="ca"><rect x="266.3" y="505" width="352.7" height="175"/></clipPath><rect x="266.3" y="505" width="352.7" height="175" fill="#eeeeee" stroke="#bcbcbc" stroke-width="0.6"/>
<path d="M281.70 505 V680" stroke="#c0c0c0" stroke-width="0.55" stroke-dasharray="0.9 0.5"/>
<path d="M335.20 505 V680" stroke="#c0c0c0" stroke-width="0.55" stroke-dasharray="0.9 0.5"/>
<path d="M388.70 505 V680" stroke="#c0c0c0" stroke-width="0.55" stroke-dasharray="0.9 0.5"/>
<path d="M442.20 505 V680" stroke="#c0c0c0" stroke-width="0.55" stroke-dasharray="0.9 0.5"/>
<path d="M495.70 505 V680" stroke="#c0c0c0" stroke-width="0.55" stroke-dasharray="0.9 0.5"/>
<path d="M549.20 505 V680" stroke="#c0c0c0" stroke-width="0.55" stroke-dasharray="0.9 0.5"/>
<path d="M602.70 505 V680" stroke="#c0c0c0" stroke-width="0.55" stroke-dasharray="0.9 0.5"/>
<path d="M266.3 660.50 H619" stroke="#c0c0c0" stroke-width="0.55" stroke-dasharray="0.9 0.5"/>
<path d="M266.3 660.50 h2.6" stroke="#333" stroke-width="0.6"/><text x="262.8" y="663.10" font-size="6.55" fill="#222" text-anchor="end">0.0</text>
<path d="M266.3 631.28 H619" stroke="#c0c0c0" stroke-width="0.55" stroke-dasharray="0.9 0.5"/>
<path d="M266.3 631.28 h2.6" stroke="#333" stroke-width="0.6"/><text x="262.8" y="633.88" font-size="6.55" fill="#222" text-anchor="end">0.2</text>
<path d="M266.3 602.06 H619" stroke="#c0c0c0" stroke-width="0.55" stroke-dasharray="0.9 0.5"/>
<path d="M266.3 602.06 h2.6" stroke="#333" stroke-width="0.6"/><text x="262.8" y="604.66" font-size="6.55" fill="#222" text-anchor="end">0.4</text>
<path d="M266.3 572.84 H619" stroke="#c0c0c0" stroke-width="0.55" stroke-dasharray="0.9 0.5"/>
<path d="M266.3 572.84 h2.6" stroke="#333" stroke-width="0.6"/><text x="262.8" y="575.44" font-size="6.55" fill="#222" text-anchor="end">0.6</text>
<path d="M266.3 543.62 H619" stroke="#c0c0c0" stroke-width="0.55" stroke-dasharray="0.9 0.5"/>
<path d="M266.3 543.62 h2.6" stroke="#333" stroke-width="0.6"/><text x="262.8" y="546.22" font-size="6.55" fill="#222" text-anchor="end">0.8</text>
<path d="M266.3 514.40 H619" stroke="#c0c0c0" stroke-width="0.55" stroke-dasharray="0.9 0.5"/>
<path d="M266.3 514.40 h2.6" stroke="#333" stroke-width="0.6"/><text x="262.8" y="517.00" font-size="6.55" fill="#222" text-anchor="end">1.0</text>
<path d="M292.40 660.50 L295.07 655.39 L297.75 653.19 L303.10 650.86 L313.80 647.64 L324.50 645.45 L335.20 643.70 L345.90 642.24 L356.60 641.07 L367.30 640.05 L378.00 639.02 L388.70 638.00 L410.10 636.54 L431.50 635.08 L452.90 633.91 L474.30 632.89 L517.10 631.57 L559.90 630.70 L602.70 630.11 L602.70 690.89 L559.90 690.30 L517.10 689.43 L474.30 688.11 L452.90 687.09 L431.50 685.92 L410.10 684.46 L388.70 683.00 L378.00 681.98 L367.30 680.95 L356.60 679.93 L345.90 678.76 L335.20 677.30 L324.50 675.55 L313.80 673.36 L303.10 670.14 L297.75 667.80 L295.07 665.61 L292.40 660.50 Z" fill="#348abd" fill-opacity="0.25" clip-path="url(#ca)"/>
<path d="M281.70 660.50 V514.40" stroke="#111" stroke-width="1.6"/><path d="M292.40 660.50 V520.24" stroke="#111" stroke-width="1.6"/><path d="M303.10 660.50 V525.80" stroke="#111" stroke-width="1.6"/><path d="M313.80 660.50 V532.81" stroke="#111" stroke-width="1.6"/><path d="M324.50 660.50 V537.19" stroke="#111" stroke-width="1.6"/><path d="M335.20 660.50 V543.62" stroke="#111" stroke-width="1.6"/><path d="M345.90 660.50 V547.42" stroke="#111" stroke-width="1.6"/><path d="M356.60 660.50 V550.92" stroke="#111" stroke-width="1.6"/><path d="M367.30 660.50 V554.43" stroke="#111" stroke-width="1.6"/><path d="M378.00 660.50 V557.65" stroke="#111" stroke-width="1.6"/><path d="M388.70 660.50 V560.42" stroke="#111" stroke-width="1.6"/><path d="M399.40 660.50 V562.76" stroke="#111" stroke-width="1.6"/><path d="M410.10 660.50 V565.10" stroke="#111" stroke-width="1.6"/><path d="M420.80 660.50 V568.60" stroke="#111" stroke-width="1.6"/><path d="M431.50 660.50 V570.65" stroke="#111" stroke-width="1.6"/><path d="M442.20 660.50 V573.28" stroke="#111" stroke-width="1.6"/><path d="M452.90 660.50 V575.76" stroke="#111" stroke-width="1.6"/><path d="M463.60 660.50 V578.54" stroke="#111" stroke-width="1.6"/><path d="M474.30 660.50 V581.17" stroke="#111" stroke-width="1.6"/><path d="M485.00 660.50 V583.65" stroke="#111" stroke-width="1.6"/><path d="M495.70 660.50 V586.72" stroke="#111" stroke-width="1.6"/><path d="M506.40 660.50 V589.50" stroke="#111" stroke-width="1.6"/><path d="M517.10 660.50 V591.39" stroke="#111" stroke-width="1.6"/><path d="M527.80 660.50 V594.90" stroke="#111" stroke-width="1.6"/><path d="M538.50 660.50 V599.72" stroke="#111" stroke-width="1.6"/><path d="M549.20 660.50 V603.67" stroke="#111" stroke-width="1.6"/><path d="M559.90 660.50 V608.34" stroke="#111" stroke-width="1.6"/><path d="M570.60 660.50 V612.58" stroke="#111" stroke-width="1.6"/><path d="M581.30 660.50 V616.67" stroke="#111" stroke-width="1.6"/><path d="M592.00 660.50 V620.47" stroke="#111" stroke-width="1.6"/><path d="M602.70 660.50 V623.97" stroke="#111" stroke-width="1.6"/><path d="M266.3 660.50 H619" stroke="#348abd" stroke-width="1.3"/>
<circle cx="281.70" cy="514.40" r="2.3" fill="#348abd"/><circle cx="292.40" cy="520.24" r="2.3" fill="#348abd"/><circle cx="303.10" cy="525.80" r="2.3" fill="#348abd"/><circle cx="313.80" cy="532.81" r="2.3" fill="#348abd"/><circle cx="324.50" cy="537.19" r="2.3" fill="#348abd"/><circle cx="335.20" cy="543.62" r="2.3" fill="#348abd"/><circle cx="345.90" cy="547.42" r="2.3" fill="#348abd"/><circle cx="356.60" cy="550.92" r="2.3" fill="#348abd"/><circle cx="367.30" cy="554.43" r="2.3" fill="#348abd"/><circle cx="378.00" cy="557.65" r="2.3" fill="#348abd"/><circle cx="388.70" cy="560.42" r="2.3" fill="#348abd"/><circle cx="399.40" cy="562.76" r="2.3" fill="#348abd"/><circle cx="410.10" cy="565.10" r="2.3" fill="#348abd"/><circle cx="420.80" cy="568.60" r="2.3" fill="#348abd"/><circle cx="431.50" cy="570.65" r="2.3" fill="#348abd"/><circle cx="442.20" cy="573.28" r="2.3" fill="#348abd"/><circle cx="452.90" cy="575.76" r="2.3" fill="#348abd"/><circle cx="463.60" cy="578.54" r="2.3" fill="#348abd"/><circle cx="474.30" cy="581.17" r="2.3" fill="#348abd"/><circle cx="485.00" cy="583.65" r="2.3" fill="#348abd"/><circle cx="495.70" cy="586.72" r="2.3" fill="#348abd"/><circle cx="506.40" cy="589.50" r="2.3" fill="#348abd"/><circle cx="517.10" cy="591.39" r="2.3" fill="#348abd"/><circle cx="527.80" cy="594.90" r="2.3" fill="#348abd"/><circle cx="538.50" cy="599.72" r="2.3" fill="#348abd"/><circle cx="549.20" cy="603.67" r="2.3" fill="#348abd"/><circle cx="559.90" cy="608.34" r="2.3" fill="#348abd"/><circle cx="570.60" cy="612.58" r="2.3" fill="#348abd"/><circle cx="581.30" cy="616.67" r="2.3" fill="#348abd"/><circle cx="592.00" cy="620.47" r="2.3" fill="#348abd"/><circle cx="602.70" cy="623.97" r="2.3" fill="#348abd"/>
<text x="442.6" y="501" font-size="10" fill="#222" text-anchor="middle">ACF</text>
<rect x="657.5" y="505" width="353.0" height="175" fill="#eeeeee" stroke="#bcbcbc" stroke-width="0.6"/>
<path d="M673.30 505 V680" stroke="#c0c0c0" stroke-width="0.55" stroke-dasharray="0.9 0.5"/>
<path d="M726.70 505 V680" stroke="#c0c0c0" stroke-width="0.55" stroke-dasharray="0.9 0.5"/>
<path d="M780.10 505 V680" stroke="#c0c0c0" stroke-width="0.55" stroke-dasharray="0.9 0.5"/>
<path d="M833.50 505 V680" stroke="#c0c0c0" stroke-width="0.55" stroke-dasharray="0.9 0.5"/>
<path d="M886.90 505 V680" stroke="#c0c0c0" stroke-width="0.55" stroke-dasharray="0.9 0.5"/>
<path d="M940.30 505 V680" stroke="#c0c0c0" stroke-width="0.55" stroke-dasharray="0.9 0.5"/>
<path d="M993.70 505 V680" stroke="#c0c0c0" stroke-width="0.55" stroke-dasharray="0.9 0.5"/>
<path d="M657.5 670.30 H1010.5" stroke="#c0c0c0" stroke-width="0.55" stroke-dasharray="0.9 0.5"/>
<path d="M657.5 670.30 h2.6" stroke="#333" stroke-width="0.6"/><text x="654.0" y="672.90" font-size="6.55" fill="#222" text-anchor="end">0.0</text>
<path d="M657.5 639.10 H1010.5" stroke="#c0c0c0" stroke-width="0.55" stroke-dasharray="0.9 0.5"/>
<path d="M657.5 639.10 h2.6" stroke="#333" stroke-width="0.6"/><text x="654.0" y="641.70" font-size="6.55" fill="#222" text-anchor="end">0.2</text>
<path d="M657.5 607.90 H1010.5" stroke="#c0c0c0" stroke-width="0.55" stroke-dasharray="0.9 0.5"/>
<path d="M657.5 607.90 h2.6" stroke="#333" stroke-width="0.6"/><text x="654.0" y="610.50" font-size="6.55" fill="#222" text-anchor="end">0.4</text>
<path d="M657.5 576.70 H1010.5" stroke="#c0c0c0" stroke-width="0.55" stroke-dasharray="0.9 0.5"/>
<path d="M657.5 576.70 h2.6" stroke="#333" stroke-width="0.6"/><text x="654.0" y="579.30" font-size="6.55" fill="#222" text-anchor="end">0.6</text>
<path d="M657.5 545.50 H1010.5" stroke="#c0c0c0" stroke-width="0.55" stroke-dasharray="0.9 0.5"/>
<path d="M657.5 545.50 h2.6" stroke="#333" stroke-width="0.6"/><text x="654.0" y="548.10" font-size="6.55" fill="#222" text-anchor="end">0.8</text>
<path d="M657.5 514.30 H1010.5" stroke="#c0c0c0" stroke-width="0.55" stroke-dasharray="0.9 0.5"/>
<path d="M657.5 514.30 h2.6" stroke="#333" stroke-width="0.6"/><text x="654.0" y="516.90" font-size="6.55" fill="#222" text-anchor="end">1.0</text>
<rect x="683.98" y="663.28" width="309.72" height="20" fill="#348abd" fill-opacity="0.25"/>
<path d="M673.30 670.30 V514.30" stroke="#111" stroke-width="1.6"/><path d="M683.98 670.30 V519.92" stroke="#111" stroke-width="1.6"/><path d="M716.02 670.30 V654.70" stroke="#111" stroke-width="1.6"/><path d="M737.38 670.30 V643.78" stroke="#111" stroke-width="1.6"/><path d="M748.06 670.30 V664.53" stroke="#111" stroke-width="1.6"/><path d="M780.10 670.30 V663.28" stroke="#111" stroke-width="1.6"/><path d="M790.78 670.30 V663.28" stroke="#111" stroke-width="1.6"/><path d="M822.82 670.30 V660.78" stroke="#111" stroke-width="1.6"/><path d="M833.50 670.30 V665.46" stroke="#111" stroke-width="1.6"/><path d="M876.22 670.30 V656.88" stroke="#111" stroke-width="1.6"/><path d="M908.26 670.30 V664.06" stroke="#111" stroke-width="1.6"/><path d="M940.30 670.30 V666.24" stroke="#111" stroke-width="1.6"/><path d="M961.66 670.30 V664.06" stroke="#111" stroke-width="1.6"/><circle cx="673.30" cy="514.30" r="2.3" fill="#348abd"/><circle cx="683.98" cy="519.92" r="2.3" fill="#348abd"/><circle cx="716.02" cy="654.70" r="2.3" fill="#348abd"/><circle cx="737.38" cy="643.78" r="2.3" fill="#348abd"/><circle cx="748.06" cy="664.53" r="2.3" fill="#348abd"/><circle cx="780.10" cy="663.28" r="2.3" fill="#348abd"/><circle cx="790.78" cy="663.28" r="2.3" fill="#348abd"/><circle cx="822.82" cy="660.78" r="2.3" fill="#348abd"/><circle cx="833.50" cy="665.46" r="2.3" fill="#348abd"/><circle cx="876.22" cy="656.88" r="2.3" fill="#348abd"/><circle cx="908.26" cy="664.06" r="2.3" fill="#348abd"/><circle cx="940.30" cy="666.24" r="2.3" fill="#348abd"/><circle cx="961.66" cy="664.06" r="2.3" fill="#348abd"/>
<text x="834.0" y="501" font-size="10" fill="#222" text-anchor="middle">PACF</text>
</svg>
<svg class="abs" style="left:807.0px;top:540.7px" width="25" height="25" viewBox="0 0 25 25"><circle cx="12.35" cy="12.4" r="12.3" fill="#332d98"/><text x="12.4" y="19.3" font-size="19.5" text-anchor="middle" fill="#fff" font-family="Liberation Sans, sans-serif">?</text></svg>

<div class="abs" style="left:847.5px;top:57px;width:11.5px;height:572px;background:#f0f0f0"></div><div class="abs" style="left:849px;top:84.5px;width:9px;height:17px;background:#c1c1c1"></div><svg class="abs" style="left:850px;top:60px" width="7" height="5" viewBox="0 0 7 5"><path d="M0.6 4 L3.4 0.8 L6.2 4 Z" fill="#444"/></svg><svg class="abs" style="left:850px;top:620px" width="7" height="5" viewBox="0 0 7 5"><path d="M0.6 0.8 L3.4 4 L6.2 0.8 Z" fill="#444"/></svg></div>

</div>
<div id="status" class="abs">
<div class="t" style="left:7px;top:13.0px;font-size:8.5px;color:#f2f2f2">上证指数</div><div class="t" style="left:45px;top:13.0px;font-size:8.5px;color:#e0464d">3311.06</div><div class="t" style="left:83.7px;top:13.0px;font-size:8.5px;color:#e0464d">0.01%</div><div class="t" style="left:112.6px;top:13.0px;font-size:8.5px;color:#f2f2f2">2461.95亿</div><div class="t" style="left:159.6px;top:13.0px;font-size:8.5px;color:#e0464d">0.321</div><div class="t" style="left:212px;top:13.0px;font-size:8.5px;color:#f2f2f2">深证成指</div><div class="t" style="left:250.5px;top:13.0px;font-size:8.5px;color:#2fd05a">11144.28</div><div class="t" style="left:295px;top:13.0px;font-size:8.5px;color:#2fd05a">-0.31%</div><div class="t" style="left:326.5px;top:13.0px;font-size:8.5px;color:#f2f2f2">3076.07亿</div><div class="t" style="left:374px;top:13.0px;font-size:8.5px;color:#2fd05a">-34.344</div><div class="t" style="left:418.5px;top:13.0px;font-size:8.5px;color:#f2f2f2">中证500</div><div class="t" style="left:454px;top:13.0px;font-size:8.5px;color:#2fd05a">6142.05</div><div class="t" style="left:493.5px;top:13.0px;font-size:8.5px;color:#2fd05a">-0.28%</div><div class="t" style="left:525px;top:13.0px;font-size:8.5px;color:#f2f2f2">891.1亿</div><div class="t" style="left:564px;top:13.0px;font-size:8.5px;color:#2fd05a">-17.335</div>
<div class="abs" style="left:739px;top:0;width:211px;height:23px;background:#2f3240"></div><div class="t" style="left:748px;top:7.5px;font-size:8.3px;color:#9a9cae">请输入代码 / 名称</div><svg class="abs" style="left:931px;top:5.5px" width="14" height="14" viewBox="0 0 14 14"><circle cx="5.6" cy="5.6" r="3.6" fill="none" stroke="#c9cad6" stroke-width="1.1"/><path d="M8.4 8.4 L11.6 11.6" stroke="#c9cad6" stroke-width="1.4"/></svg><div class="abs" style="left:955.3px;top:8.6px;width:8px;height:8px;border-radius:4px;background:#9cf31f"></div><div class="abs" style="left:969.3px;top:8px;width:1.2px;height:9px;background:#c8c8c8"></div><div class="t" style="left:982px;top:8.3px;font-size:8.5px;color:#e8e04a">11:41&nbsp; 2023/5/16 星期二</div>
</div>
</body>
</html>
